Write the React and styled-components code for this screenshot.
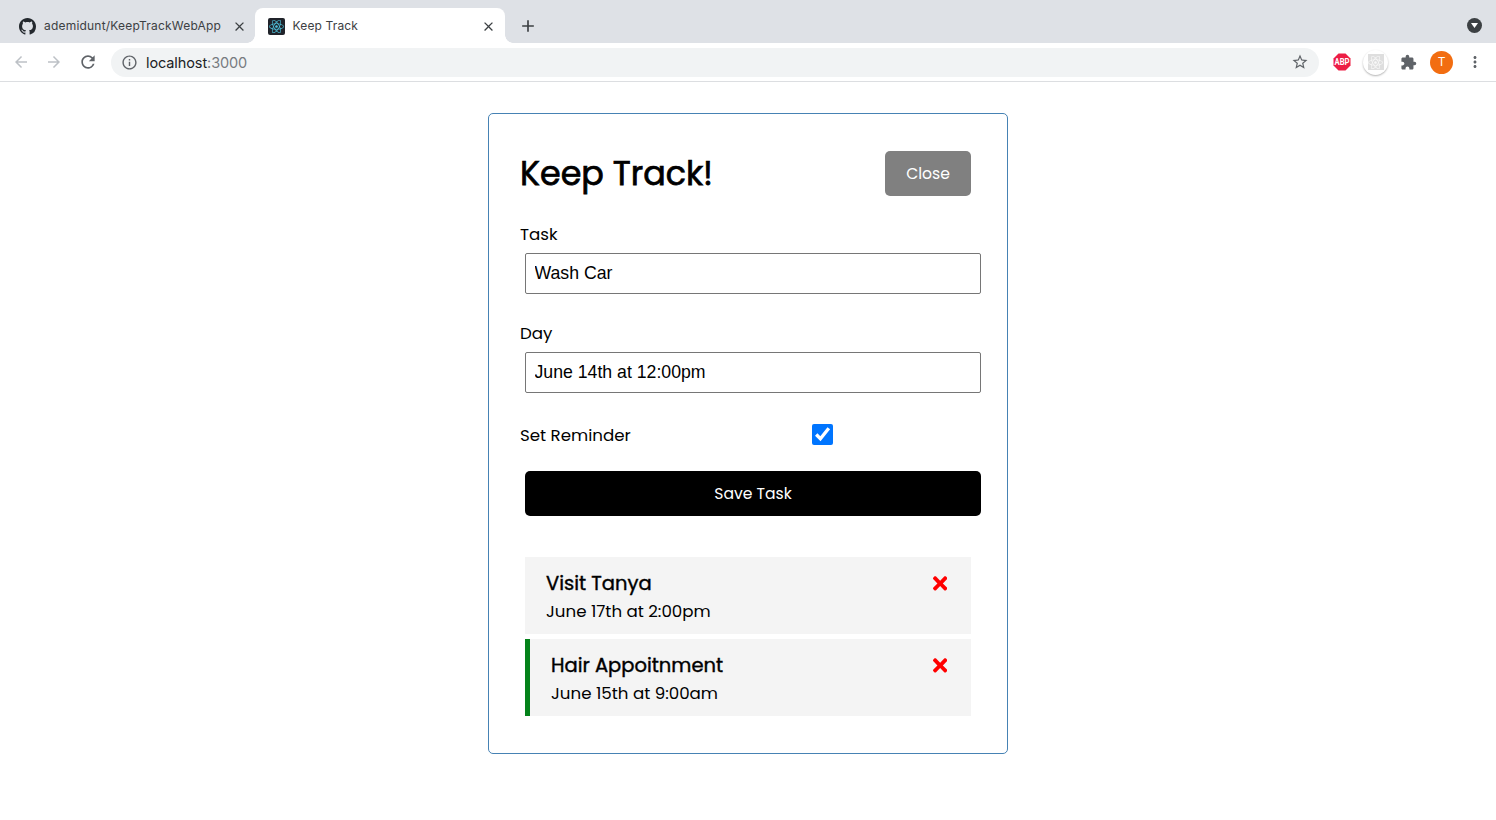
import React from "react";
import styled, { createGlobalStyle } from "styled-components";
import { FaTimes, FaReact } from "react-icons/fa";
import {
  MdArrowBack, MdArrowForward, MdRefresh, MdInfoOutline, MdStarBorder,
  MdExtension, MdMoreVert, MdClose, MdAdd,
} from "react-icons/md";

const GlobalStyle = createGlobalStyle`
  * { box-sizing: border-box; }
  html, body { margin: 0; padding: 0; background: #fff; }
  body { font-family: Poppins, Inter, sans-serif; color: #000; overflow: hidden; }
  svg { display: block; flex: none; }
`;

const TabStrip = styled.div`
  display: flex;
  height: 43px;
  padding: 8px 12px 0 8px;
  background: #dee1e6;
  color: #3c4043;
`;

const Tab = styled.div`
  position: relative;
  display: flex;
  align-items: center;
  width: ${(p) => (p.$active ? 250 : 247)}px;
  height: 35px;
  padding: 1px ${(p) => (p.$active ? 9 : 8)}px 0 ${(p) => (p.$active ? 12.5 : 11)}px;
  border-radius: 8px 8px 0 0;
  background: ${(p) => (p.$active ? "#fff" : "transparent")};
  &::before, &::after {
    content: "";
    display: ${(p) => (p.$active ? "block" : "none")};
    position: absolute;
    bottom: 0;
    width: 8px;
    height: 8px;
  }
  &::before { left: -8px; background: radial-gradient(circle at 0 0, transparent 7.5px, #fff 8px); }
  &::after { right: -8px; background: radial-gradient(circle at 100% 0, transparent 7.5px, #fff 8px); }
`;

const TabTitle = styled.span`
  flex: 1;
  margin-left: 8px;
  font: 400 12px/16px Inter, sans-serif;
  letter-spacing: ${(p) => p.$spacing || 0}px;
  white-space: nowrap;
`;

const Favicon = styled.span`
  display: grid;
  place-items: center;
  width: 17px;
  height: 17px;
  border-radius: 2px;
  background: #20232a;
  color: #4fc3dc;
`;

const NewTab = styled.span`
  display: flex;
  align-items: center;
  height: 36px;
  margin-left: 13px;
`;

const TabMenu = styled.span`
  display: grid;
  place-items: center;
  width: 15px;
  height: 15px;
  margin: 10px 2px 0 auto;
  border-radius: 50%;
  background: #3c4043;
`;

const Toolbar = styled.div`
  display: flex;
  align-items: center;
  height: 39px;
  padding: 0 12px;
  border-bottom: 1px solid #dcdee1;
  background: #fff;
  color: #5f6368;
`;

const Navigation = styled.div`
  display: flex;
  align-items: center;
  gap: 15px;
  width: 99px;
`;

const NavIcon = styled.span`
  color: ${(p) => (p.$disabled ? "#bdc1c6" : "#5f6368")};
`;

const AddressBar = styled.div`
  display: flex;
  align-items: center;
  width: 1208px;
  height: 29px;
  padding: 0 10px;
  border-radius: 15px;
  background: #f1f3f4;
`;

const Address = styled.span`
  flex: 1;
  margin-left: 8px;
  padding-top: 1px;
  font: 400 14.5px/20px Inter, sans-serif;
  letter-spacing: -0.1px;
  color: #777b80;
`;

const Host = styled.span`
  color: #202124;
`;

const Extensions = styled.div`
  display: flex;
  align-items: center;
  flex: 1;
  margin-left: 14px;
`;

const ReactBadge = styled.span`
  display: grid;
  place-items: center;
  width: 25px;
  height: 25px;
  margin: 0 12px;
  border-radius: 50%;
  background: #fff;
  box-shadow: 0 1px 2px rgba(0, 0, 0, 0.3);
`;

const ReactTile = styled.span`
  display: grid;
  place-items: center;
  width: 16px;
  height: 16px;
  background: #dedede;
  color: #f8f8f8;
`;

const Avatar = styled.span`
  display: grid;
  place-items: center;
  width: 23px;
  height: 23px;
  margin: 0 13px;
  border-radius: 50%;
  background: #f26d11;
  color: #fff;
  font: 400 12px/1 Roboto, sans-serif;
`;

const Container = styled.main`
  width: 520px;
  height: 641px;
  margin: 31px auto 0;
  padding: 37px 26px 0 31px;
  border: 1px solid steelblue;
  border-radius: 5px;
`;

const Header = styled.header`
  display: flex;
  justify-content: space-between;
  height: 46px;
  padding-right: 10px;
  margin-bottom: 25px;
`;

const Copy = styled.span`
  font-family: Poppins, Inter, sans-serif;
  font-size: ${(p) => p.$size || 16.67}px;
  font-weight: 400;
  line-height: ${(p) => p.$line || 25}px;
  white-space: nowrap;
`;

const Title = styled.h1`
  margin: 0;
  font: 400 33.33px/46px Poppins, Inter, sans-serif;
  -webkit-text-stroke: 0.75px #000;
  white-space: nowrap;
`;

const TaskTitle = styled.h3`
  margin: 0;
  font: 400 19.5px/30px Poppins, Inter, sans-serif;
  -webkit-text-stroke: 0.4px #000;
  white-space: nowrap;
`;

const Button = styled.button`
  display: flex;
  align-items: center;
  justify-content: center;
  width: ${(p) => (p.$block ? "456px" : "86px")};
  height: 45px;
  margin-left: ${(p) => (p.$block ? 5 : 0)}px;
  padding: 0;
  border: 0;
  border-radius: 5px;
  background: ${(p) => p.$color};
  color: #fff;
`;

const Form = styled.form`
  display: flex;
  flex-direction: column;
  margin: 0 0 41px;
`;

const Field = styled.label`
  display: flex;
  flex-direction: column;
  height: 99px;
`;

const TextInput = styled.input`
  width: 456px;
  height: 41px;
  margin: 6px 0 0 5px;
  padding: 0 8.5px 1px;
  border: 1px solid #767676;
  border-radius: 2px;
  font: 400 17.7px "Liberation Sans", Arial, sans-serif;
  color: #000;
  outline: 0;
`;

const ReminderRow = styled.label`
  display: flex;
  align-items: center;
  height: 25px;
  margin: 2px 0 24px;
`;

const ReminderLabel = styled.span`
  display: flex;
  width: 292px;
  padding-top: 1px;
`;

const CheckBox = styled.input`
  width: 21px;
  height: 21px;
  margin: 0;
  accent-color: #0075ff;
`;

const TaskList = styled.div`
  display: flex;
  flex-direction: column;
  gap: 5px;
  width: 446px;
  margin-left: 5px;
`;

const TaskCard = styled.article`
  display: flex;
  justify-content: space-between;
  height: 77px;
  padding: 12px 24px 0 21px;
  border-left: ${(p) => (p.$reminder ? "5px solid #04821a" : "0")};
  background: #f4f4f4;
`;

const TaskText = styled.div`
  display: flex;
  flex-direction: column;
`;

const DeleteIcon = styled(FaTimes)`
  width: 14.3px;
  height: 20.8px;
  margin-top: 4px;
  color: red;
`;

const tasks = [
  { title: "Visit Tanya", day: "June 17th at 2:00pm", reminder: false },
  { title: "Hair Appoitnment", day: "June 15th at 9:00am", reminder: true },
];

function GithubMark() {
  return (
    <svg width="17" height="17" viewBox="0 0 16 16" fill="#24292e">
      <path d="M8 0C3.58 0 0 3.58 0 8c0 3.54 2.29 6.53 5.47 7.59.4.07.55-.17.55-.38 0-.19-.01-.82-.01-1.49-2.01.37-2.53-.49-2.69-.94-.09-.23-.48-.94-.82-1.13-.28-.15-.68-.52-.01-.53.63-.01 1.08.58 1.23.82.72 1.21 1.87.87 2.33.66.07-.52.28-.87.51-1.07-1.78-.2-3.64-.89-3.64-3.95 0-.87.31-1.59.82-2.15-.08-.2-.36-1.02.08-2.12 0 0 .67-.21 2.2.82.64-.18 1.32-.27 2-.27s1.36.09 2 .27c1.53-1.04 2.2-.82 2.2-.82.44 1.1.16 1.92.08 2.12.51.56.82 1.27.82 2.15 0 3.07-1.87 3.75-3.65 3.95.29.25.54.73.54 1.48 0 1.07-.01 1.93-.01 2.2 0 .21.15.46.55.38A8.01 8.01 0 0 0 16 8c0-4.42-3.58-8-8-8z" />
    </svg>
  );
}

function AdBlockIcon() {
  return (
    <svg width="18" height="18" viewBox="0 0 18 18">
      <path d="M5.5.5h7l5 5v7l-5 5h-7l-5-5v-7z" fill="#ed1e45" />
      <text x="9" y="12.2" textAnchor="middle" textLength="15" lengthAdjust="spacingAndGlyphs" fontFamily="Roboto, sans-serif" fontSize="8.8" fontWeight="700" fill="#fff">ABP</text>
    </svg>
  );
}

export default function App() {
  return (
    <>
      <GlobalStyle />
      <TabStrip>
        <Tab>
          <GithubMark />
          <TabTitle $spacing={0.2}>ademidunt/KeepTrackWebApp</TabTitle>
          <MdClose size={15} />
        </Tab>
        <Tab $active>
          <Favicon><FaReact size={15} /></Favicon>
          <TabTitle $spacing={0.15}>Keep Track</TabTitle>
          <MdClose size={15} />
        </Tab>
        <NewTab><MdAdd size={20} /></NewTab>
        <TabMenu>
          <svg width="7" height="5" viewBox="0 0 7 5"><path d="M0 0h7L3.5 5z" fill="#fff" /></svg>
        </TabMenu>
      </TabStrip>
      <Toolbar>
        <Navigation>
          <NavIcon $disabled><MdArrowBack size={18} /></NavIcon>
          <NavIcon $disabled><MdArrowForward size={18} /></NavIcon>
          <NavIcon><MdRefresh size={20} /></NavIcon>
        </Navigation>
        <AddressBar>
          <MdInfoOutline size={17} />
          <Address><Host>localhost</Host>:3000</Address>
          <MdStarBorder size={18} />
        </AddressBar>
        <Extensions>
          <AdBlockIcon />
          <ReactBadge><ReactTile><FaReact size={15} /></ReactTile></ReactBadge>
          <MdExtension size={17} />
          <Avatar>T</Avatar>
          <MdMoreVert size={18} />
        </Extensions>
      </Toolbar>
      <Container>
        <Header>
          <Title>Keep Track!</Title>
          <Button $color="gray"><Copy $size={15.63}>Close</Copy></Button>
        </Header>
        <Form>
          <Field>
            <Copy>Task</Copy>
            <TextInput defaultValue="Wash Car" />
          </Field>
          <Field>
            <Copy>Day</Copy>
            <TextInput defaultValue="June 14th at 12:00pm" />
          </Field>
          <ReminderRow>
            <ReminderLabel><Copy>Set Reminder</Copy></ReminderLabel>
            <CheckBox type="checkbox" defaultChecked />
          </ReminderRow>
          <Button type="button" $block $color="#000"><Copy $size={15.63}>Save Task</Copy></Button>
        </Form>
        <TaskList>
          {tasks.map((task) => (
            <TaskCard key={task.title} $reminder={task.reminder}>
              <TaskText>
                <TaskTitle>{task.title}</TaskTitle>
                <Copy>{task.day}</Copy>
              </TaskText>
              <DeleteIcon />
            </TaskCard>
          ))}
        </TaskList>
      </Container>
    </>
  );
}
